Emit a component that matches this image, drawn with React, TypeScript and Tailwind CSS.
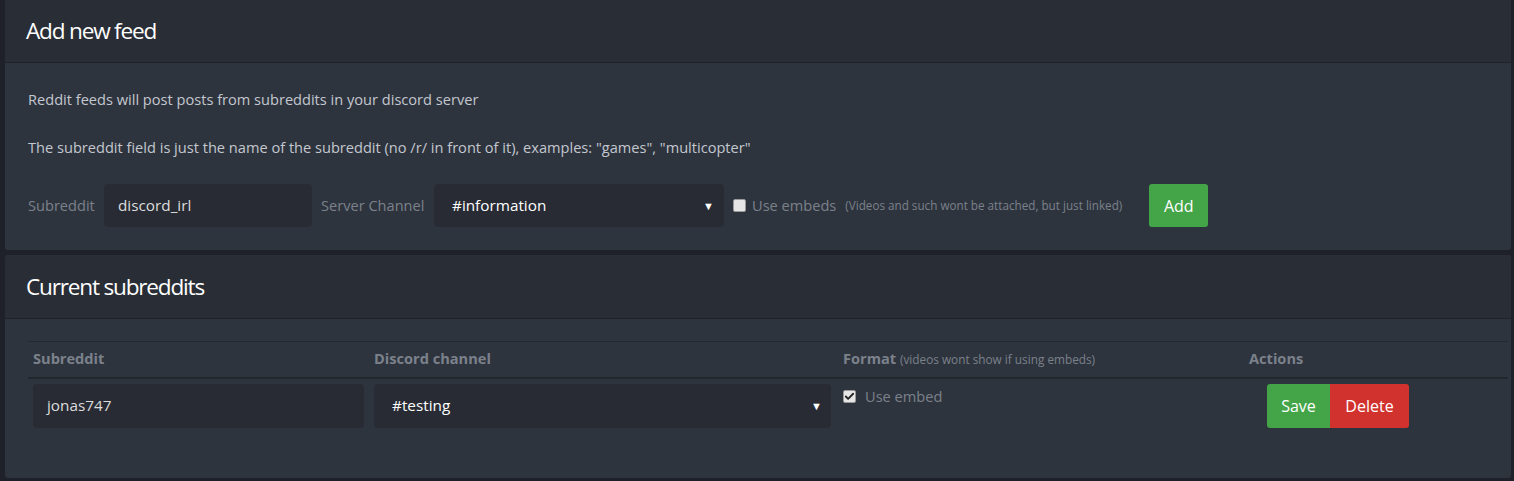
import { Check } from 'lucide-react'

function Box({ checked }: { checked?: boolean }) {
  return (
    <span className="inline-flex h-[13px] w-[13px] shrink-0 items-center justify-center rounded-[2px] border border-[#9a9a9a] bg-[#e6e6e6]">
      {checked && <Check size={11} strokeWidth={4} className="text-[#222]" />}
    </span>
  )
}

function Caret() {
  return <span className="text-[11px] leading-none text-white">▼</span>
}

export default function App() {
  return (
    <div className="min-h-[481px] bg-[#1e2129] pl-[5px] pr-[3px] font-['Open_Sans',sans-serif]">
      <section className="overflow-hidden rounded-b-[3px] bg-[#2e343e]">
        <div className="flex h-[63px] items-center border-b border-[#1f2229] bg-[#292d35] pl-[21px]">
          <h2 className="text-[22.6px] tracking-[-1.2px] text-white">Add new feed</h2>
        </div>
        <div className="h-[187px] pl-[23px] pt-[26px]">
          <p className="text-[14.6px] leading-5 text-[#c3c7ce]">Reddit feeds will post posts from subreddits in your discord server</p>
          <p className="mt-[28px] text-[14.6px] leading-5 text-[#c3c7ce]">
            The subreddit field is just the name of the subreddit (no /r/ in front of it), examples: "games", "multicopter"
          </p>
          <div className="mt-[27px] flex h-[43px] items-center">
            <span className="w-[76px] text-[14.6px] text-[#7b818b]">Subreddit</span>
            <div className="flex h-full w-[208px] items-center rounded-[4px] bg-[#282b33] pl-[14px] text-[15.3px] text-[#dcdcdc]">discord_irl</div>
            <span className="w-[122px] pl-[9px] text-[14.6px] text-[#7b818b]">Server Channel</span>
            <div className="flex h-full w-[290px] items-center justify-between rounded-[4px] bg-[#282b33] pl-[18px] pr-[10px] text-[15.3px] text-white">
              <span>#information</span>
              <Caret />
            </div>
            <div className="ml-[9px] flex items-center gap-[6px]">
              <Box />
              <span className="text-[14.6px] text-[#7b818b]">Use embeds</span>
              <span className="ml-[3px] text-[11.7px] text-[#7b818b]">(Videos and such wont be attached, but just linked)</span>
            </div>
            <button className="ml-[27px] h-full w-[59px] rounded-[3px] bg-[#43a547] text-[16px] text-white">Add</button>
          </div>
        </div>
      </section>

      <section className="mt-[5px] overflow-hidden rounded-[3px] bg-[#2e343e]">
        <div className="flex h-[64px] items-center border-b border-[#1f2229] bg-[#292d35] pl-[21px]">
          <h2 className="text-[22.6px] tracking-[-1.2px] text-white">Current subreddits</h2>
        </div>
        <div className="h-[159px] pl-[23px] pr-[3px] pt-[22px]">
          <table className="w-full border-collapse border-t border-[#242830] text-left">
            <thead>
              <tr className="h-[36px] border-b-2 border-[#22262d] text-[14.6px] font-bold text-[#7b818b]">
                <th className="w-[341px] pl-[5px] font-bold">Subreddit</th>
                <th className="w-[469px] pl-[5px] font-bold">Discord channel</th>
                <th className="w-[406px] pl-[5px] font-bold">
                  Format <span className="text-[11.8px] font-normal">(videos wont show if using embeds)</span>
                </th>
                <th className="pl-[5px] font-bold">Actions</th>
              </tr>
            </thead>
            <tbody>
              <tr>
                <td className="px-[5px] pt-[5px] align-top">
                  <div className="flex h-[44px] items-center rounded-[4px] bg-[#282b33] pl-[14px] text-[15.3px] text-[#dcdcdc]">jonas747</div>
                </td>
                <td className="pl-[5px] pr-[7px] pt-[5px] align-top">
                  <div className="flex h-[44px] items-center justify-between rounded-[4px] bg-[#282b33] pl-[18px] pr-[9px] text-[15.3px] text-white">
                    <span>#testing</span>
                    <Caret />
                  </div>
                </td>
                <td className="pl-[5px] pt-[7px] align-top">
                  <div className="flex items-center gap-[9px]">
                    <Box checked />
                    <span className="text-[14.6px] text-[#7b818b]">Use embed</span>
                  </div>
                </td>
                <td className="pl-[23px] pt-[5px] align-top">
                  <div className="flex h-[44px]">
                    <button className="w-[63px] rounded-l-[3px] bg-[#43a547] text-[16px] text-white">Save</button>
                    <button className="w-[79px] rounded-r-[3px] bg-[#d2322d] text-[16px] text-white">Delete</button>
                  </div>
                </td>
              </tr>
            </tbody>
          </table>
        </div>
      </section>
    </div>
  )
}
